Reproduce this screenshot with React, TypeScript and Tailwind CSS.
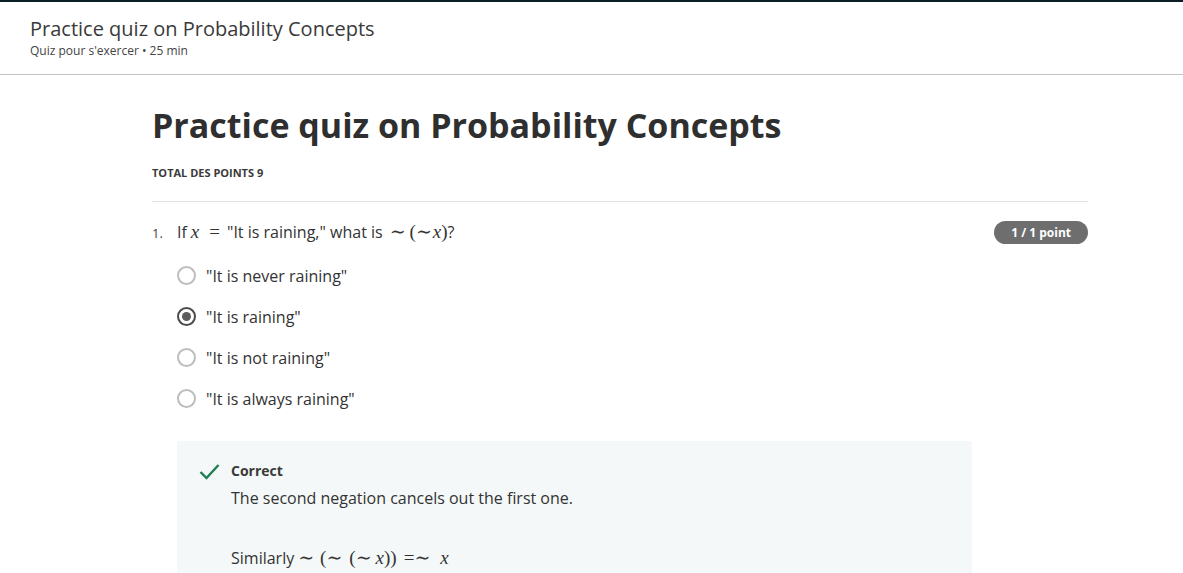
import React from "react";

type P = { children: React.ReactNode; className?: string };
const M = ({ children, className = "" }: P) => (
  <span className={"inline-block text-[19px] italic [font-family:'Liberation_Serif','DejaVu_Serif',serif] " + className}>
    {children}
  </span>
);
const R = ({ children, className = "" }: P) => (
  <span className={"inline-block text-[19px] [font-family:'Liberation_Serif','DejaVu_Serif',serif] " + className}>
    {children}
  </span>
);

function Radio({ checked }: { checked?: boolean }) {
  return checked ? (
    <span className="flex h-[19px] w-[19px] items-center justify-center rounded-full border-[2.5px] border-[#4a4a4a]">
      <span className="h-[9px] w-[9px] rounded-full bg-[#5c5c5c]" />
    </span>
  ) : (
    <span className="h-[19px] w-[19px] rounded-full border-2 border-[#bdbdbd]" />
  );
}

export default function App() {
  const options = [
    { t: '"It is never raining"' },
    { t: '"It is raining"', c: true },
    { t: '"It is not raining"' },
    { t: '"It is always raining"' },
  ];
  return (
    <div className="h-[573px] w-[1183px] overflow-hidden bg-white text-[#333] [font-family:'Open_Sans','Noto_Sans',sans-serif]">
      <div className="h-[2px] bg-[#0b1d26]" />
      <header className="border-b border-[#c4c4c4] px-[30px] pb-[15px] pt-[14px]">
        <h1 className="text-[20px] leading-[26px] text-[#3a3a3a]">Practice quiz on Probability Concepts</h1>
        <p className="mt-[1px] text-[12px] leading-[16px] text-[#444]">Quiz pour s'exercer • 25 min</p>
      </header>
      <main className="ml-[152px] w-[936px]">
        <h2 className="mt-[27px] text-[34px] font-bold leading-[46px] text-[#2f2f2f]">
          Practice quiz on Probability Concepts
        </h2>
        <div className="mt-[17px] border-b border-[#e1e1e1] pb-[21px] text-[11px] font-bold leading-[15px] text-[#3a3a3a]">
          TOTAL DES POINTS 9
        </div>
        <div className="mt-[19px] flex items-center justify-between">
          <div className="flex items-baseline text-[16px] leading-[22px] text-[#333]">
            <span className="w-[25px] text-[13px] text-[#444]">1.</span>
            <span>
              If<M className="ml-[4px]">x</M>
              <R className="ml-[10px] mr-[7px]">=</R>"It is raining," what is<R className="ml-[7px]">∼</R>
              <R className="ml-[4px]">(</R>
              <R>∼</R>
              <M className="ml-[1px]">x</M>
              <R>)</R>?
            </span>
          </div>
          <span className="rounded-full bg-[#6e6e6e] px-[17px] py-[3px] text-[12px] font-bold leading-[17px] text-white">
            1 / 1 point
          </span>
        </div>
        <div className="ml-[25px] mt-[11px] flex flex-col">
          {options.map((o) => (
            <div key={o.t} className="flex h-[41px] items-center gap-[10px]">
              <Radio checked={o.c} />
              <span className="text-[16px] text-[#333]">{o.t}</span>
            </div>
          ))}
        </div>
        <div className="ml-[25px] mt-[22px] w-[795px] bg-[#f5f8f8] pb-[20px] pl-[22px] pt-[20px]">
          <div className="flex items-center gap-[11px]">
            <svg width="21" height="17" viewBox="0 0 21 17" fill="none">
              <path d="M1.5 9 L7.5 15 L19.5 2" stroke="#1f7f53" strokeWidth="2.4" />
            </svg>
            <span className="text-[14px] font-bold leading-[20px] text-[#3a3a3a]">Correct</span>
          </div>
          <div className="ml-[32px] mt-[6px] text-[16px] leading-[22px] text-[#333]">
            The second negation cancels out the first one.
          </div>
          <div className="ml-[32px] mt-[38px] text-[16px] leading-[22px] text-[#333]">
            Similarly<R className="ml-[4px]">∼</R>
            <R className="ml-[6px]">(</R>
            <R>∼</R>
            <R className="ml-[7px]">(</R>
            <R>∼</R>
            <M className="ml-[4px]">x</M>
            <R>))</R>
            <R className="ml-[7px]">=</R>
            <R>∼</R>
            <M className="ml-[10px]">x</M>
          </div>
        </div>
      </main>
    </div>
  );
}
